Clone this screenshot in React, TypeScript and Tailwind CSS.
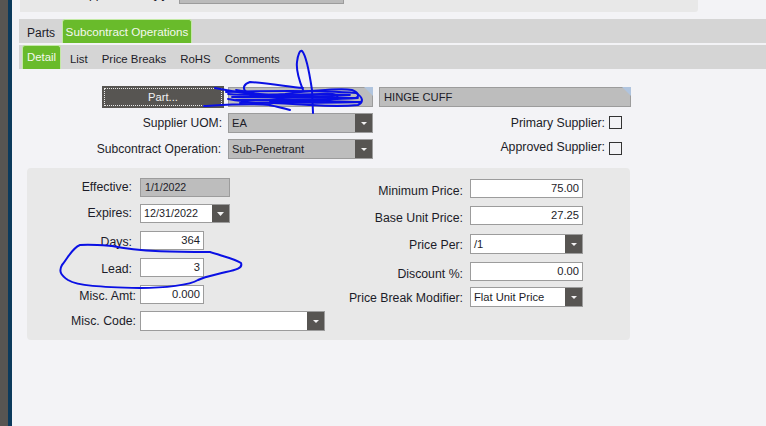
import type { ReactNode } from 'react';

const fieldBase = 'h-full border border-[#9c9c9c] text-[11.2px] text-[#1c1c28] flex items-center';

function Arrow({ big }: { big?: boolean }) {
  return (
    <span className="h-full w-[17px] bg-[#575552] flex items-center justify-center shrink-0">
      <svg width={big ? 7 : 6} height={big ? 4 : 3} viewBox="0 0 7 4" preserveAspectRatio="none">
        <path d="M0 0h7L3.5 4z" fill="#f2f2f2" />
      </svg>
    </span>
  );
}

function Label({ children, w, className = '' }: { children: ReactNode; w: string; className?: string }) {
  return <span className={`${w} ${className} shrink-0 text-right text-[12.3px] leading-none text-[#1c1c28] whitespace-nowrap`}>{children}</span>;
}

function Input({ value, w }: { value: string; w: string }) {
  return <div className={`${fieldBase} ${w} bg-white justify-end pr-[3px]`}>{value}</div>;
}

function Select({ value, w, grey }: { value: string; w: string; grey?: boolean }) {
  return (
    <div className={`${fieldBase} ${w} ${grey ? 'bg-[#bdbdbd]' : 'bg-white'} justify-between pl-[3px]`}>
      <span>{value}</span>
      <Arrow />
    </div>
  );
}

function LeftRow({ label, mt, h, wide, drop = '', children }: { label: string; mt: string; h: string; wide?: boolean; drop?: string; children: ReactNode }) {
  return (
    <div className={`flex items-center ${mt} ${h}`}>
      <Label w={wide ? 'w-[109px] mr-[4px]' : 'w-[105px] mr-[8px]'} className={drop}>
        {label}
      </Label>
      <div className="h-full flex">{children}</div>
    </div>
  );
}

function RightRow({ label, mt, h, drop = '', children }: { label: string; mt: string; h: string; drop?: string; children: ReactNode }) {
  return (
    <div className={`flex items-center ${mt} ${h}`}>
      <Label w="w-[122px] mr-[7px]" className={drop}>
        {label}
      </Label>
      <div className="h-full flex">{children}</div>
    </div>
  );
}

function Scribbles() {
  return (
    <svg className="absolute left-0 top-0 pointer-events-none" width="766" height="426" viewBox="0 0 766 426" fill="none" stroke="#0a10e4" strokeLinecap="round" strokeLinejoin="round">
      <path
        strokeWidth="2"
        d="M80 245C72 248 68 258 62 265C58 272 62 276 68 280C78 286 100 287 140 288C165 288 190 285 198 280C206 276 215 275 226 272C236 270 243 268 241 263C236 259 222 256 210 252C180 252 140 252 112 246C100 245 90 244 80 245Z"
      />
      <path
        strokeWidth="2"
        d="M303 90C299 80 296 70 297 62C298 54 300 50 302 51C305 54 309 70 312 90L313 113M303 88C285 86 265 83 250 82C244 84 242 88 246 92"
      />
      <path strokeWidth="2" d="M215 88C235 92 255 96 285 94C310 91 340 88 352 90C358 92 360 96 356 98" />
      <path strokeWidth="2" d="M204 106C222 105 250 103 270 105C278 107 285 109 290 110C272 104 245 102 228 99" />
      <path strokeWidth="2" d="M226 92C260 91 320 90 356 93C363 97 364 102 358 105C340 107 325 106 312 105C290 104 270 102 240 103" />
      <path strokeWidth="1.8" d="M228 94C262 97 300 92 350 95C320 97 270 96 232 97C270 98 320 97 358 98C330 100 280 100 236 100C270 101 320 100 361 102C335 103 300 103 270 102" />
      <path strokeWidth="1.8" d="M236 90C262 95 290 99 320 94C335 92 345 97 330 100C300 104 270 96 250 95" />
    </svg>
  );
}

export default function App() {
  return (
    <div className="relative w-[766px] h-[426px] overflow-hidden flex bg-[#f3f3f6] font-['Liberation_Sans',Arial,sans-serif]">
      <div className="w-[8px] bg-[#575552]" />
      <div className="w-[4px] bg-[#0b3a5c]" />

      <div className="flex-1 min-w-0">
        <div className="ml-[8px] w-[678px] h-[12px] bg-[#e8e8e8] rounded-br-[3px] flex items-start">
          <span className="w-[151px] -mt-[13px] text-right text-[12.3px] leading-[14px] text-[#1c1c28] whitespace-nowrap">Supplier Part Qty:</span>
          <div className="ml-[8px] w-[165px] h-[4px] bg-[#bbbbbb] border-x border-b border-[#9c9c9c]" />
        </div>

        <div className="ml-[7px] mt-[7px] h-[24px] bg-[#d5d5d5] flex">
          <span className="ml-[8px] mt-[7px] text-[12px] leading-[14px] text-[#1c1c28]">Parts</span>
          <span className="ml-[7px] w-[130px] h-full bg-[#69bb2b] border border-b-0 border-[#c3e8a5] rounded-t-[3px] text-[11.7px] leading-[23px] text-center text-[#f4f8ee] whitespace-nowrap">
            Subcontract Operations
          </span>
        </div>

        <div className="ml-[7px] mt-[2px] h-[24px] bg-[#d5d5d5] flex text-[11.4px] text-[#1c1c28]">
          <span className="ml-[3px] w-[39px] h-full bg-[#69bb2b] border border-b-0 border-[#c3e8a5] rounded-t-[3px] leading-[23px] text-center text-[#f4f8ee]">
            Detail
          </span>
          <div className="ml-[9px] flex gap-[14px] leading-[14px] pt-[7px]">
            <span>List</span>
            <span>Price Breaks</span>
            <span>RoHS</span>
            <span>Comments</span>
          </div>
        </div>

        <div className="mt-[17px]">
          <div className="flex h-[22px]">
            <div className="ml-[90px] w-[122px] h-full bg-[#575552] p-[2px]">
              <div className="h-full border border-dotted border-[#e8e8e8] text-[11.2px] leading-[16px] text-center text-[#f2f2f2]">Part...</div>
            </div>
            <div className="relative ml-[4px] mt-[1px] w-[145px] h-[20px] bg-[#bdbdbd] border border-[#9c9c9c]">
              <span className="absolute right-[-1px] top-[-1px] border-t-[9px] border-l-[9px] border-t-[#b0c4de] border-l-transparent" />
            </div>
            <div className="relative ml-[6px] mt-[1px] w-[252px] h-[20px] bg-[#bdbdbd] border border-[#9c9c9c] text-[11.2px] leading-[18px] text-[#1c1c28] pl-[4px]">
              HINGE CUFF
              <span className="absolute right-[-1px] top-[-1px] border-t-[9px] border-l-[9px] border-t-[#b0c4de] border-l-transparent" />
            </div>
          </div>

          <div className="flex mt-[5px] h-[20px] items-center">
            <Label w="w-[210px]" className="!text-[12.1px]">
              Supplier UOM:
            </Label>
            <div className="ml-[6px] h-full flex">
              <Select value="EA" w="w-[145px]" grey />
            </div>
            <Label w="w-[232px]">Primary Supplier:</Label>
            <span className="ml-[4px] mb-[2px] w-[13px] h-[13px] border border-[#333] bg-[#f3f3f6]" />
          </div>

          <div className="flex mt-[6px] h-[20px] items-center">
            <Label w="w-[209px] mr-[1px]" className="!text-[12.1px]">
              Subcontract Operation:
            </Label>
            <div className="ml-[6px] h-full flex">
              <Select value="Sub-Penetrant" w="w-[145px]" grey />
            </div>
            <Label w="w-[232px]" className="pb-[3px]">
              Approved Supplier:
            </Label>
            <span className="ml-[4px] mb-[1px] w-[13px] h-[13px] border border-[#333] bg-[#f3f3f6]" />
          </div>
        </div>

        <div className="ml-[15px] mt-[9px] w-[603px] h-[172px] bg-[#e8e8e8] rounded-[4px] flex">
          <div className="w-[300px] pt-[10px]">
            <LeftRow label="Effective:" mt="mt-0" h="h-[19px]">
              <div className={`${fieldBase} w-[90px] bg-[#bdbdbd] pl-[4px] !text-[10.6px]`}>1/1/2022</div>
            </LeftRow>
            <LeftRow label="Expires:" mt="mt-[7px]" h="h-[19px]">
              <div className={`${fieldBase} w-[90px] bg-white justify-between pl-[3px] !text-[10.8px]`}>
                <span>12/31/2022</span>
                <Arrow big />
              </div>
            </LeftRow>
            <LeftRow label="Days:" mt="mt-[8px]" h="h-[19px]" drop="pt-[3px]">
              <Input value="364" w="w-[64px]" />
            </LeftRow>
            <LeftRow label="Lead:" mt="mt-[8px]" h="h-[19px]" drop="pt-[3px]">
              <Input value="3" w="w-[64px]" />
            </LeftRow>
            <LeftRow label="Misc. Amt:" mt="mt-[8px]" h="h-[19px]" wide drop="pt-[3px]">
              <Input value="0.000" w="w-[64px]" />
            </LeftRow>
            <LeftRow label="Misc. Code:" mt="mt-[7px]" h="h-[20px]" wide>
              <Select value="" w="w-[185px]" />
            </LeftRow>
          </div>
          <div className="pt-[11px] ml-[14px]">
            <RightRow label="Minimum Price:" mt="mt-0" h="h-[19px]" drop="pt-[6px]">
              <Input value="75.00" w="w-[113px]" />
            </RightRow>
            <RightRow label="Base Unit Price:" mt="mt-[8px]" h="h-[19px]" drop="pt-[6px]">
              <Input value="27.25" w="w-[113px]" />
            </RightRow>
            <RightRow label="Price Per:" mt="mt-[9px]" h="h-[20px]" drop="pt-[2px]">
              <Select value="/1" w="w-[113px]" />
            </RightRow>
            <RightRow label="Discount %:" mt="mt-[8px]" h="h-[19px]" drop="pt-[5px]">
              <Input value="0.00" w="w-[113px]" />
            </RightRow>
            <RightRow label="Price Break Modifier:" mt="mt-[6px]" h="h-[20px]" drop="pt-[2px]">
              <Select value="Flat Unit Price" w="w-[113px]" />
            </RightRow>
          </div>
        </div>
      </div>

      <Scribbles />
    </div>
  );
}
